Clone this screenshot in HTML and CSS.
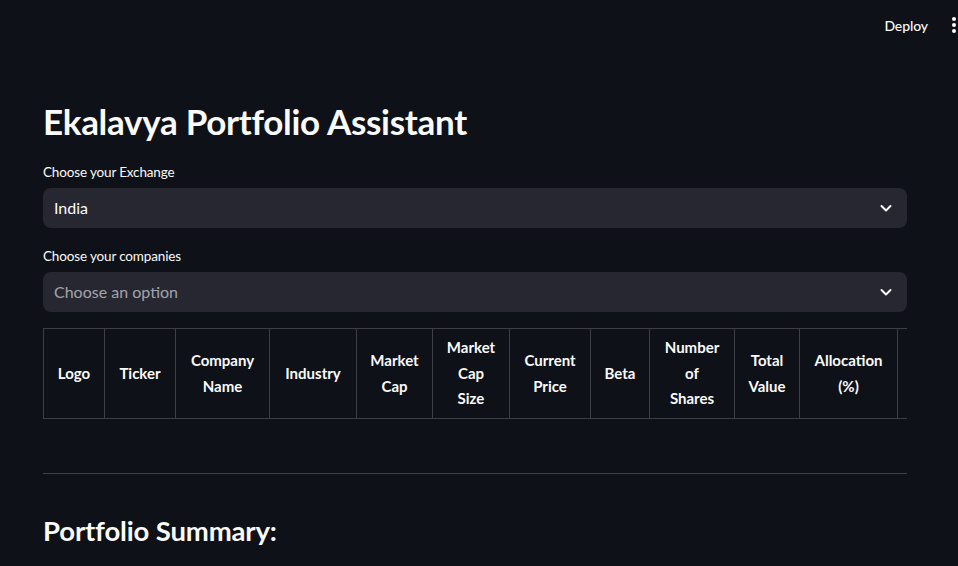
FILE: index.html
```html
<!DOCTYPE html>
<html lang="en">
<head>
<meta charset="utf-8">
<title>Ekalavya Portfolio Assistant</title>
<link rel="stylesheet" href="styles.css">
</head>
<body>
<header class="topbar">
  <span class="deploy">Deploy</span>
  <span class="kebab"><i></i><i></i><i></i></span>
</header>
<main class="block">
  <h1 class="title">Ekalavya Portfolio Assistant</h1>

  <label class="label">Choose your Exchange</label>
  <div class="select">
    <span class="value">India</span>
    <svg class="chev" width="14" height="14" viewBox="0 0 14 14"><path d="M2.5 5 L7 9.5 L11.5 5" fill="none" stroke="#fafafa" stroke-width="2" stroke-linecap="round" stroke-linejoin="round"/></svg>
  </div>

  <label class="label">Choose your companies</label>
  <div class="select">
    <span class="value placeholder">Choose an option</span>
    <svg class="chev" width="14" height="14" viewBox="0 0 14 14"><path d="M2.5 5 L7 9.5 L11.5 5" fill="none" stroke="#fafafa" stroke-width="2" stroke-linecap="round" stroke-linejoin="round"/></svg>
  </div>

  <div class="table-wrap">
    <table class="grid">
      <colgroup>
        <col class="c-logo"><col class="c-ticker"><col class="c-name"><col class="c-ind"><col class="c-mcap"><col class="c-mcs"><col class="c-price"><col class="c-beta"><col class="c-shares"><col class="c-total"><col class="c-alloc">
      </colgroup>
      <thead>
        <tr>
          <th>Logo</th>
          <th>Ticker</th>
          <th>Company<br>Name</th>
          <th>Industry</th>
          <th>Market<br>Cap</th>
          <th>Market<br>Cap<br>Size</th>
          <th>Current<br>Price</th>
          <th>Beta</th>
          <th>Number<br>of<br>Shares</th>
          <th>Total<br>Value</th>
          <th>Allocation<br>(%)</th>
        </tr>
      </thead>
    </table>
  </div>

  <hr class="divider">

  <h2 class="subtitle">Portfolio Summary:</h2>
</main>
</body>
</html>
```

FILE: styles.css
```css
html, body {
  margin: 0;
  padding: 0;
  background: #0e1117;
  color: #fafafa;
  font-family: "Source Sans Pro", "Lato", "Noto Sans", sans-serif;
  overflow: hidden;
}

.topbar {
  height: 50px;
  display: flex;
  align-items: center;
  justify-content: flex-end;
  gap: 24px;
  padding-right: 2px;
}

.deploy {
  font-size: 14px;
  font-weight: 500;
  letter-spacing: -0.1px;
  color: #fafafa;
}

.kebab {
  display: flex;
  flex-direction: column;
  gap: 2px;
}

.kebab i {
  display: block;
  width: 4px;
  height: 4px;
  border-radius: 50%;
  background: #fafafa;
}

.block {
  width: 864px;
  padding: 50px 0 0 43px;
}

.title {
  margin: 0 0 19px;
  font-size: 35px;
  line-height: 43px;
  letter-spacing: -0.3px;
  font-weight: 700;
}

.label {
  display: block;
  font-size: 13.5px;
  letter-spacing: -0.15px;
  line-height: 20px;
  margin-bottom: 6px;
}

.select {
  height: 40px;
  border-radius: 8px;
  background: #262730;
  display: flex;
  align-items: center;
  justify-content: space-between;
  padding: 0 14px 0 11px;
  margin-bottom: 18px;
}

.value {
  font-size: 16px;
  line-height: 20px;
}

.placeholder {
  color: rgba(250, 250, 250, 0.6);
}

.table-wrap {
  margin-top: -2px;
  border-top: 1px solid rgba(250, 250, 250, 0.2);
  border-bottom: 1px solid rgba(250, 250, 250, 0.2);
  overflow: hidden;
}

.grid {
  border-collapse: collapse;
  table-layout: fixed;
  width: 854px;
}

.grid th {
  height: 89px;
  padding: 0 4px;
  font-size: 15px;
  line-height: 25.5px;
  font-weight: 700;
  text-align: center;
  vertical-align: middle;
  border-left: 1px solid rgba(250, 250, 250, 0.2);
  border-right: 1px solid rgba(250, 250, 250, 0.2);
}

.c-logo { width: 61px; }
.c-ticker { width: 71px; }
.c-name { width: 94px; }
.c-ind { width: 87px; }
.c-mcap { width: 76px; }
.c-mcs { width: 77px; }
.c-price { width: 81px; }
.c-beta { width: 59px; }
.c-shares { width: 85px; }
.c-total { width: 65px; }
.c-alloc { width: 98px; }

.divider {
  margin: 54px 0 0;
  border: 0;
  border-top: 1px solid rgba(250, 250, 250, 0.2);
  height: 0;
}

.subtitle {
  margin: 39px 0 0;
  font-size: 27.5px;
  letter-spacing: -0.15px;
  line-height: 36px;
  font-weight: 700;
}
```
